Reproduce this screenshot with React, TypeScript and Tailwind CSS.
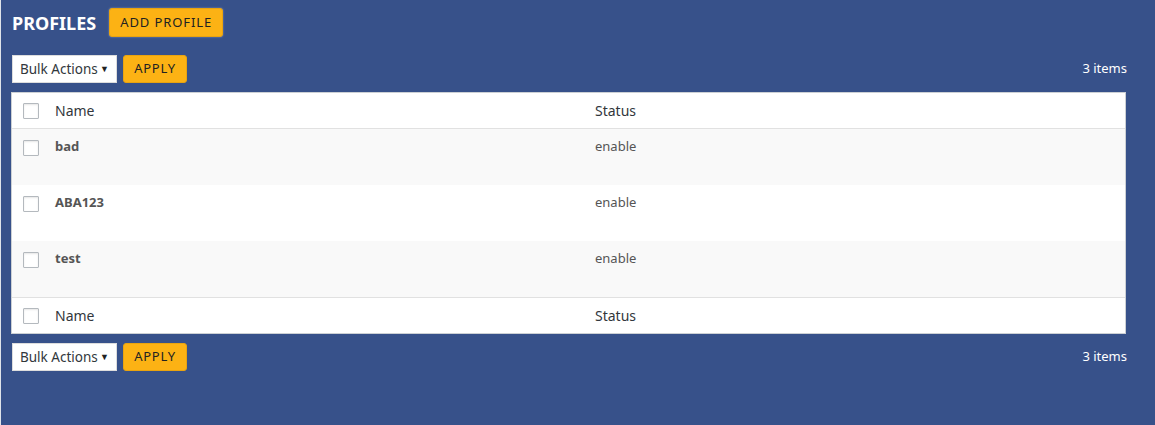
import React from "react";

const font = { fontFamily: '"Noto Sans", "Open Sans", sans-serif' };

function Checkbox() {
  return <div className="w-4 h-4 border border-[#b4b9be] bg-white rounded-[1px] shadow-[inset_0_1px_2px_rgba(0,0,0,0.1)]" />;
}

function Controls() {
  return (
    <div className="flex items-center justify-between ml-[1px] mr-[-1px]">
      <div className="flex items-center gap-[6px]">
        <div className="h-[28px] w-[105px] bg-white border border-[#ddd] flex items-center justify-between pl-[7px] pr-[7px] text-[13.5px] text-[#32373c]">
          <span>Bulk Actions</span>
          <span className="text-[9px] text-[#222]">▼</span>
        </div>
        <button className="h-[28px] w-[64px] bg-[#fcb214] border border-[#e9a30f] rounded-[3px] text-[13px] tracking-[0.06em] text-[#222] flex items-center justify-center">
          APPLY
        </button>
      </div>
      <div className="text-[13px] text-white">3 items</div>
    </div>
  );
}

function HeadRow({ border }: { border: "b" | "t" }) {
  return (
    <div
      className={
        "flex items-center h-[36px] bg-white text-[14px] text-[#32373c] " +
        (border === "b" ? "border-b border-[#e1e1e1]" : "border-t border-[#e1e1e1]")
      }
    >
      <div className="w-[43px] pl-[11px] shrink-0 flex items-center">
        <Checkbox />
      </div>
      <div className="w-[540px] shrink-0 pb-[1px]">Name</div>
      <div className="pb-[1px]">Status</div>
    </div>
  );
}

function Row({ name, alt }: { name: string; alt: boolean }) {
  return (
    <div className={"flex h-[56px] pt-[11px] " + (alt ? "bg-[#f9f9f9]" : "bg-white")}>
      <div className="w-[43px] pl-[11px] shrink-0">
        <Checkbox />
      </div>
      <div className="w-[540px] shrink-0 text-[13px] font-bold text-[#555] leading-[13px]">{name}</div>
      <div className="text-[13px] text-[#555] leading-[13px]">enable</div>
    </div>
  );
}

export default function App() {
  return (
    <div style={font} className="w-[1155px] h-[425px] bg-[#37518a] shadow-[inset_1px_0_0_#dfe3ea] pl-[11px] pr-[29px] pt-[8px] overflow-hidden">
      <div className="flex items-center gap-[13px] h-[29px] ml-[1px]">
        <h1 className="text-[18px] font-bold text-white leading-none">PROFILES</h1>
        <button className="h-[29px] w-[114px] bg-[#fcb214] border border-[#e9a30f] rounded-[3px] text-[13px] tracking-[0.07em] text-[#222] flex items-center justify-center shadow-[0_0_2px_rgba(255,255,255,0.4)]">
          ADD PROFILE
        </button>
      </div>
      <div className="mt-[18px]">
        <Controls />
      </div>
      <div className="mt-[9px] border border-[#ccd0d4] bg-white">
        <HeadRow border="b" />
        <Row name="bad" alt={true} />
        <Row name="ABA123" alt={false} />
        <Row name="test" alt={true} />
        <HeadRow border="t" />
      </div>
      <div className="mt-[9px]">
        <Controls />
      </div>
    </div>
  );
}
